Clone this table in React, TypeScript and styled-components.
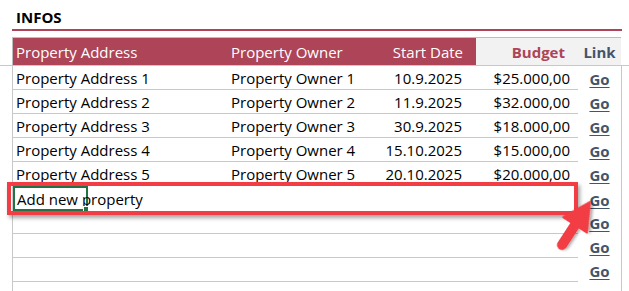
import { FC } from "react";
import styled, { createGlobalStyle } from "styled-components";

const GlobalStyle = createGlobalStyle`
  body {
    margin: 0;
    background: #fff;
    font-family: "Open Sans", "Liberation Sans", sans-serif;
    color: #000;
  }
`;

const COLS = "215px 142px 106px 102px 43px";
const GRID = "#c8c8c8";
const MAROON = "#ad4457";
const SLATE = "#44546a";

const Page = styled.div`
  position: relative;
  width: 629px;
  height: 291px;
  overflow: hidden;
`;

const Title = styled.h1`
  margin: 0;
  padding: 7px 0 0 16px;
  height: 22px;
  font-size: 15px;
  font-weight: 700;
  line-height: 20px;
`;

const TitleRule = styled.div`
  margin-left: 12px;
  width: 610px;
  height: 2px;
  background: ${MAROON};
`;

const HeaderBand = styled.div`
  margin-top: 6px;
  padding: 0 8px 0 12px;
  border-bottom: 1px solid ${GRID};
`;

const HeaderRow = styled.div`
  display: grid;
  grid-template-columns: ${COLS};
  height: 27px;
  border: 1px solid #bdbdbd;
  border-bottom: none;
`;

const HeadCell = styled.div<{ $align?: "left" | "right" | "center"; $tone: "red" | "grey" }>`
  display: flex;
  align-items: center;
  justify-content: ${({ $align }) =>
    $align === "right" ? "flex-end" : $align === "center" ? "center" : "flex-start"};
  padding: 0 ${({ $align }) => ($align === "right" ? "13px" : "3px")};
  background: ${({ $tone }) => ($tone === "red" ? MAROON : "#f2f2f2")};
  color: #fff;
  font-size: 15px;
  white-space: nowrap;
`;

const BudgetHead = styled(HeadCell)`
  color: ${MAROON};
  font-weight: 700;
`;

const LinkHead = styled(HeadCell)`
  color: ${SLATE};
  font-weight: 700;
`;

const Body = styled.div`
  padding-left: 12px;
`;

const Sheet = styled.div`
  width: 608px;
  border-left: 1px solid ${GRID};
  border-right: 1px solid ${GRID};
`;

const Row = styled.div`
  position: relative;
  display: grid;
  grid-template-columns: ${COLS};
  height: 24px;
`;

const Cell = styled.div<{ $align?: "left" | "right" }>`
  display: flex;
  align-items: center;
  justify-content: ${({ $align }) => ($align === "right" ? "flex-end" : "flex-start")};
  padding: 0 ${({ $align }) => ($align === "right" ? "8px" : "3px")};
  border-bottom: 1px solid ${GRID};
  font-size: 15px;
  white-space: nowrap;
`;

const DateCell = styled(Cell)`
  padding-right: 14px;
`;

const LinkCell = styled.div`
  display: flex;
  align-items: center;
  justify-content: center;
  padding-top: 1px;
`;

const GoLink = styled.a`
  color: ${SLATE};
  font-size: 15px;
  font-weight: 700;
  text-decoration: underline;
  text-underline-offset: 2px;
  cursor: pointer;
`;

const Selected = styled.span`
  position: relative;
  margin-left: -3px;
  padding: 0 1px 0 2px;
  height: 25px;
  width: 75px;
  display: flex;
  align-items: center;
  border: 2px solid #217346;
  box-sizing: border-box;
  overflow: visible;
  &::after {
    content: "";
    position: absolute;
    right: -3px;
    bottom: -3px;
    width: 4px;
    height: 4px;
    background: #217346;
    border: 1px solid #fff;
  }
`;

const Highlight = styled.div`
  position: absolute;
  left: -6px;
  top: -4px;
  width: 571px;
  height: 33px;
  box-sizing: border-box;
  border: 4px solid #f23d45;
  box-shadow: 2px 3px 4px rgba(0, 0, 0, 0.35);
  pointer-events: none;
`;

const Arrow = styled.svg`
  position: absolute;
  left: 540px;
  top: 190px;
  width: 60px;
  height: 70px;
  overflow: visible;
`;

type Property = {
  address: string;
  owner: string;
  start: string;
  budget: string;
};

const properties: Property[] = [
  { address: "Property Address 1", owner: "Property Owner 1", start: "10.9.2025", budget: "$25.000,00" },
  { address: "Property Address 2", owner: "Property Owner 2", start: "11.9.2025", budget: "$32.000,00" },
  { address: "Property Address 3", owner: "Property Owner 3", start: "30.9.2025", budget: "$18.000,00" },
  { address: "Property Address 4", owner: "Property Owner 4", start: "15.10.2025", budget: "$15.000,00" },
  { address: "Property Address 5", owner: "Property Owner 5", start: "20.10.2025", budget: "$20.000,00" },
];

const Go: FC = () => (
  <LinkCell>
    <GoLink>Go</GoLink>
  </LinkCell>
);

export default function App() {
  return (
    <Page>
      <GlobalStyle />
      <Title>INFOS</Title>
      <TitleRule />
      <HeaderBand>
        <HeaderRow>
          <HeadCell $tone="red">Property Address</HeadCell>
          <HeadCell $tone="red">Property Owner</HeadCell>
          <HeadCell $tone="red" $align="right">Start Date</HeadCell>
          <BudgetHead $tone="grey" $align="right">Budget</BudgetHead>
          <LinkHead $tone="grey" $align="center">Link</LinkHead>
        </HeaderRow>
      </HeaderBand>
      <Body>
        <Sheet>
          {properties.map((p) => (
            <Row key={p.address}>
              <Cell>{p.address}</Cell>
              <Cell>{p.owner}</Cell>
              <DateCell $align="right">{p.start}</DateCell>
              <Cell $align="right">{p.budget}</Cell>
              <Go />
            </Row>
          ))}
          <Row>
            <Cell>
              <Selected>Add new property</Selected>
            </Cell>
            <Cell />
            <Cell />
            <Cell />
            <Go />
            <Highlight />
          </Row>
          {[0, 1, 2, 3].map((i) => (
            <Row key={i}>
              <Cell />
              <Cell />
              <Cell />
              <Cell />
              <Go />
            </Row>
          ))}
        </Sheet>
      </Body>
      <Arrow viewBox="0 0 60 70">
        <defs>
          <filter id="arrowShadow" x="-30%" y="-30%" width="160%" height="160%">
            <feDropShadow dx="1.5" dy="2" stdDeviation="1.5" floodColor="#000" floodOpacity="0.35" />
          </filter>
        </defs>
        <g transform="translate(22 55) rotate(-57)" filter="url(#arrowShadow)">
          <line x1="0" y1="0" x2="28" y2="0" stroke="#f23d45" strokeWidth="10" strokeLinecap="round" />
          <polygon points="24,-14 51,0 24,14" fill="#f23d45" strokeLinejoin="round" stroke="#f23d45" strokeWidth="2" />
        </g>
      </Arrow>
    </Page>
  );
}
